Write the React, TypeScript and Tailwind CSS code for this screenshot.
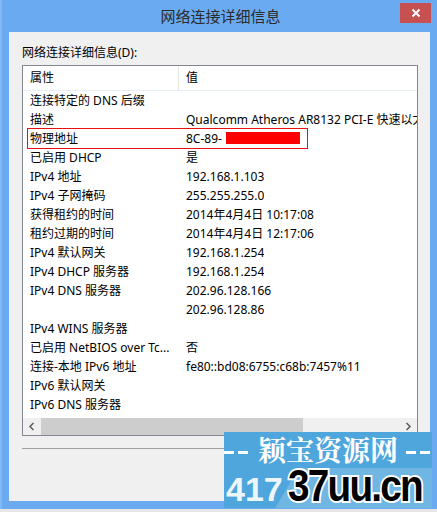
import React from "react";

const rows: [string, React.ReactNode][] = [
  ["连接特定的 DNS 后缀", ""],
  ["描述", "Qualcomm Atheros AR8132 PCI-E 快速以太网控制器 (NDIS 6.30)"],
  ["物理地址", "MAC"],
  ["已启用 DHCP", "是"],
  ["IPv4 地址", "192.168.1.103"],
  ["IPv4 子网掩码", "255.255.255.0"],
  ["获得租约的时间", "2014年4月4日 10:17:08"],
  ["租约过期的时间", "2014年4月4日 12:17:06"],
  ["IPv4 默认网关", "192.168.1.254"],
  ["IPv4 DHCP 服务器", "192.168.1.254"],
  ["IPv4 DNS 服务器", "202.96.128.166"],
  ["", "202.96.128.86"],
  ["IPv4 WINS 服务器", ""],
  ["已启用 NetBIOS over Tc...", "否"],
  ["连接-本地 IPv6 地址", "fe80::bd08:6755:c68b:7457%11"],
  ["IPv6 默认网关", ""],
  ["IPv6 DNS 服务器", ""],
];

function Dashes() {
  return (
    <div className="flex gap-[4px] w-[26px] shrink-0">
      <div className="w-[10px] h-[3px] bg-white" />
      <div className="w-[10px] h-[3px] bg-white" />
    </div>
  );
}

export default function App() {
  return (
    <div
      className="w-[437px] h-[512px] bg-[#e6e6e6] relative overflow-hidden text-black"
      style={{ fontFamily: '"Noto Sans", "Noto Sans CJK SC", sans-serif' }}
    >
      <div className="h-[509px] bg-[#6aaaf0] border-l-2 border-[#7fb8f3] flex flex-col">
        {/* Title bar */}
        <div className="h-[32px] grid grid-cols-[1fr_auto_1fr]">
          <div />
          <div className="text-[15px] leading-[32px] text-[#2b2b2b] pl-[2px]">网络连接详细信息</div>
          <div className="flex justify-end items-start pt-[3px] pr-[6px]">
            <div className="w-[31px] h-[20px] bg-[#c75050] flex items-center justify-center">
              <svg width="10" height="10" viewBox="0 0 10 10">
                <path d="M1.5 1.5 L8.5 8.5 M8.5 1.5 L1.5 8.5" stroke="#fff" strokeWidth="2" />
              </svg>
            </div>
          </div>
        </div>
        {/* Client */}
        <div className="flex-1 ml-[7px] mr-[7px] mb-[8px] bg-[#f0f0f0] pl-[13px] pr-[12px] pt-[13px] flex flex-col">
          <div className="text-[12px] leading-[16px] h-[16px]">网络连接详细信息(D):</div>
          <div className="mt-[4px] h-[371px] border border-[#828790] bg-white flex flex-col">
            {/* Header */}
            <div className="h-[25px] border-b border-[#e5eef9] flex text-[12px] shrink-0">
              <div className="w-[156px] pl-[7px] leading-[24px] border-r border-[#e5e5e5]">属性</div>
              <div className="pl-[7px] leading-[24px]">值</div>
            </div>
            {/* Rows */}
            <div className="flex-1 overflow-hidden">
              {rows.map(([k, v], i) => (
                <div key={i} className="h-[19px] flex text-[12px] leading-[19px] relative whitespace-nowrap">
                  <div className="w-[157px] pl-[7px] shrink-0 overflow-hidden">{k}</div>
                  <div className="pl-[6px] overflow-hidden">
                    {v === "MAC" ? (
                      <span>
                        8C-89-
                        <span className="inline-block ml-[4px] w-[74px] h-[12px] bg-[#ff0000] align-[-1px]" />
                      </span>
                    ) : (
                      v
                    )}
                  </div>
                  {v === "MAC" && (
                    <div className="absolute left-[4px] top-[-1px] w-[281px] h-[21px] border border-[#e81010]" />
                  )}
                </div>
              ))}
            </div>
            {/* Horizontal scrollbar */}
            <div className="h-[17px] bg-[#f0f0f0] flex shrink-0">
              <div className="w-[17px] flex items-center justify-center">
                <svg width="7" height="9" viewBox="0 0 7 9">
                  <path d="M5.5 1 L2 4.5 L5.5 8" stroke="#606060" strokeWidth="1.6" fill="none" />
                </svg>
              </div>
              <div className="w-[262px] bg-[#cdcdcd] ml-px" />
              <div className="flex-1" />
              <div className="w-[17px] flex items-center justify-center">
                <svg width="7" height="9" viewBox="0 0 7 9">
                  <path d="M1.5 1 L5 4.5 L1.5 8" stroke="#606060" strokeWidth="1.6" fill="none" />
                </svg>
              </div>
            </div>
          </div>
          <div className="mt-[12px] h-px bg-[#a0a0a0]" />
        </div>
      </div>

      {/* Watermark overlay */}
      <div className="absolute left-[224px] top-[432px] w-[208px] h-[76px] bg-[#4ea6dc] overflow-hidden">
        <div className="absolute left-[60px] top-[36px] w-[200px] h-[50px] bg-[#7dbde6] opacity-70 skew-x-[-30deg]" />
        <div
          className="absolute left-0 top-[0px] w-[208px] h-[34px] flex items-center justify-between text-white"
          style={{ fontFamily: '"Noto Serif CJK SC", "Liberation Serif", serif' }}
        >
          <div className="pt-[6px]"><Dashes /></div>
          <span className="text-[28px] font-bold leading-none">颖宝资源网</span>
          <div className="pt-[6px]"><Dashes /></div>
        </div>
        <div
          className="absolute left-[2px] top-[40px] text-[34px] font-bold leading-none text-white opacity-90"
          style={{ fontFamily: '"Liberation Sans", sans-serif' }}
        >
          417
        </div>
        <div
          className="absolute left-[64px] top-[32px] text-[44px] font-bold leading-none text-black tracking-[-2px] [-webkit-text-stroke:4px_white] [paint-order:stroke_fill] origin-left scale-x-[0.88]"
          style={{ fontFamily: '"Liberation Sans", sans-serif' }}
        >
          37uu.cn
        </div>
      </div>
    </div>
  );
}
